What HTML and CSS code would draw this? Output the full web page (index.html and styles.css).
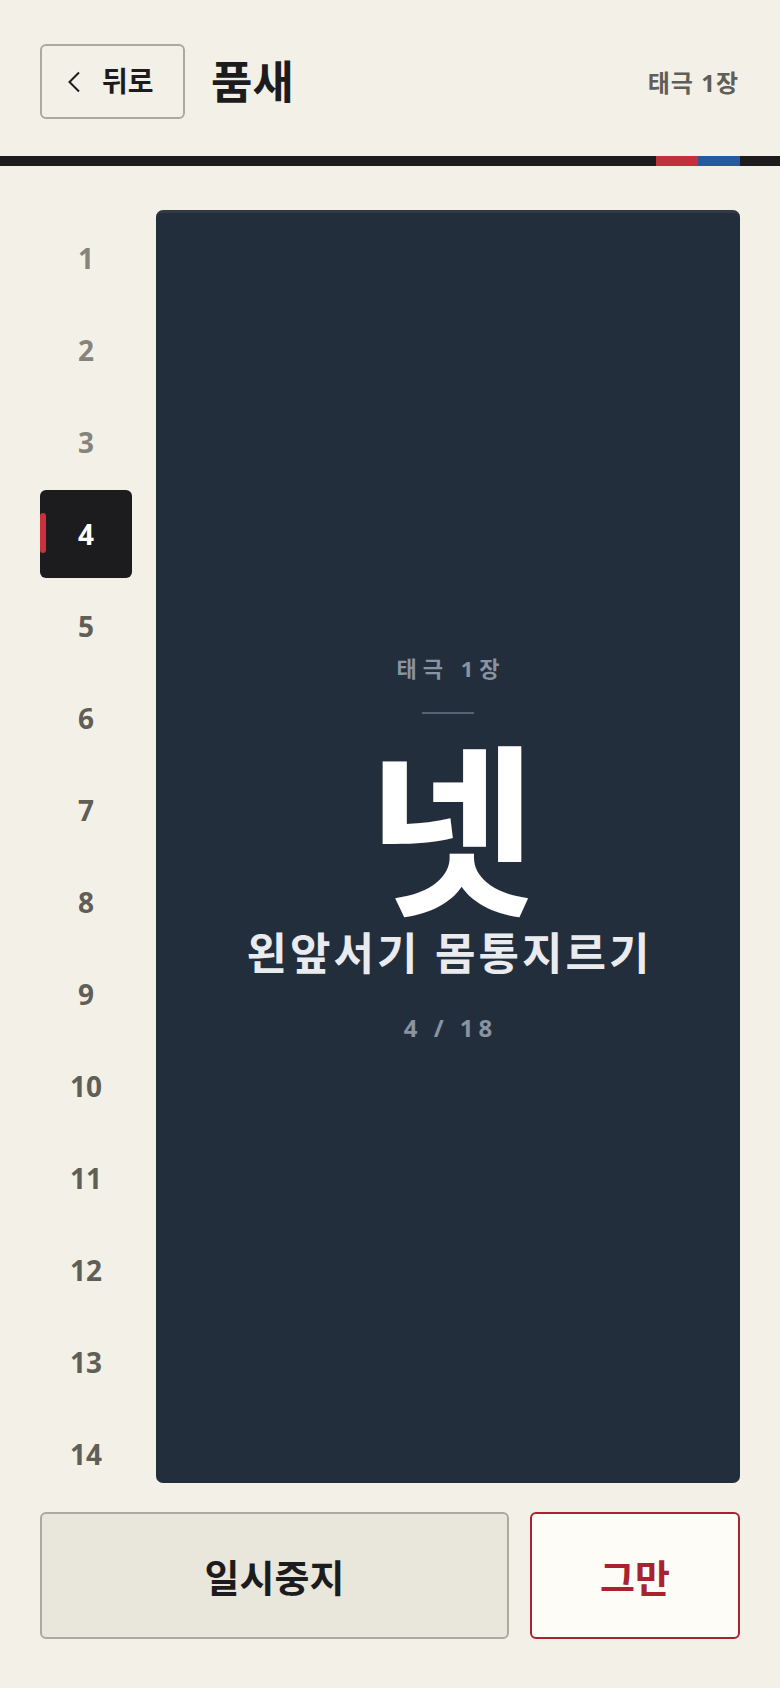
FILE: index.html
```html
<!DOCTYPE html>
<html lang="ko">
<head>
<meta charset="utf-8">
<title>품새</title>
<link rel="stylesheet" href="styles.css">
</head>
<body>
<div class="app">
  <header class="header">
    <button class="back">
      <svg class="chev" width="14" height="22" viewBox="0 0 14 22"><polyline points="12,1.5 2.5,11 12,20.5" fill="none" stroke="#1c1c1e" stroke-width="2"/></svg>
      <span>뒤로</span>
    </button>
    <h1 class="title">품새</h1>
    <div class="form-name">태극 1장</div>
  </header>
  <div class="bar"><span class="b-fill"></span><span class="b-red"></span><span class="b-blue"></span><span class="b-end"></span></div>
  <main class="main">
    <nav class="steps">
      <div class="step done">1</div>
      <div class="step done">2</div>
      <div class="step done">3</div>
      <div class="step active">4</div>
      <div class="step">5</div>
      <div class="step">6</div>
      <div class="step">7</div>
      <div class="step">8</div>
      <div class="step">9</div>
      <div class="step">10</div>
      <div class="step">11</div>
      <div class="step">12</div>
      <div class="step">13</div>
      <div class="step">14</div>
    </nav>
    <section class="panel">
      <div class="p-label">태극 1장</div>
      <div class="p-rule"></div>
      <div class="p-count">넷</div>
      <div class="p-move">왼앞서기 몸통지르기</div>
      <div class="p-progress">4 / 18</div>
    </section>
  </main>
  <footer class="actions">
    <button class="btn pause">일시중지</button>
    <button class="btn stop">그만</button>
  </footer>
</div>
</body>
</html>
```
FILE: styles.css
```css
* { box-sizing: border-box; }
html, body { margin: 0; padding: 0; }
body {
  background: #f3f0e8;
  font-family: "Noto Sans", "Noto Sans CJK KR", sans-serif;
  color: #1c1c1e;
}
.app {
  width: 780px;
  height: 1688px;
  display: flex;
  flex-direction: column;
}
.header {
  height: 156px;
  padding: 44px 41px 0 40px;
  display: flex;
  align-items: flex-start;
}
.back {
  width: 145px;
  height: 75px;
  border: 2px solid #aca99f;
  border-radius: 6px;
  background: transparent;
  display: flex;
  align-items: center;
  padding: 0 0 0 25px;
  gap: 21px;
  font-family: inherit;
  font-size: 28px;
  font-weight: 700;
  color: #1c1c1e;
  cursor: pointer;
}
.back span { line-height: 1; margin-top: -2px; }
.title {
  margin: 0 0 0 26px;
  height: 75px;
  display: flex;
  align-items: center;
  font-size: 45px;
  font-weight: 700;
  line-height: 1;
}
.form-name {
  margin-left: auto;
  height: 75px;
  display: flex;
  align-items: center;
  font-size: 24px;
  font-weight: 700;
  color: #5f5e58;
  letter-spacing: 1px;
}
.bar {
  height: 10px;
  display: flex;
}
.b-fill { flex: 1; background: #1c1c1e; }
.b-red { width: 42px; background: #c0313b; }
.b-blue { width: 42px; background: #2859a0; }
.b-end { width: 40px; background: #1c1c1e; }
.main {
  height: 1273px;
  margin-top: 44px;
  padding: 0 40px;
  display: flex;
  gap: 24px;
}
.steps {
  width: 92px;
  flex: none;
  padding-top: 4px;
  overflow: hidden;
  display: flex;
  flex-direction: column;
  gap: 4px;
}
.step {
  flex: none;
  height: 88px;
  border-radius: 6px;
  display: flex;
  align-items: center;
  justify-content: center;
  font-size: 28px;
  font-weight: 700;
  color: #5f5e57;
  position: relative;
}
.step.done { color: #85847c; }
.step.active { background: #1c1c1e; color: #ffffff; }
.step.active::before {
  content: "";
  position: absolute;
  left: 0;
  top: 23px;
  width: 6px;
  height: 40px;
  border-radius: 3px;
  background: #c8323c;
}
.panel {
  flex: 1;
  background: #232e3d;
  border-top: 3px solid #2f3a49;
  border-radius: 7px;
  display: flex;
  flex-direction: column;
  align-items: center;
  justify-content: center;
}
.p-label {
  font-size: 22px;
  font-weight: 700;
  letter-spacing: 6px;
  margin-right: -6px;
  color: #8a93a0;
  line-height: 1;
}
.p-rule {
  width: 52px;
  height: 2px;
  background: #566172;
  margin-top: 33px;
}
.p-count {
  font-family: "Noto Sans CJK KR", sans-serif;
  font-size: 184px;
  font-weight: 700;
  color: #ffffff;
  line-height: 1;
  margin-top: 15px;
  padding-left: 8px;
}
.p-move {
  font-size: 44px;
  font-weight: 700;
  color: #e9ebef;
  letter-spacing: 3px;
  margin-right: -3px;
  line-height: 1;
  margin-top: 18px;
}
.p-progress {
  font-size: 24px;
  font-weight: 700;
  color: #8a93a0;
  letter-spacing: 5px;
  margin-right: -5px;
  line-height: 1;
  margin-top: 41px;
}
.actions {
  margin-top: 29px;
  padding: 0 40px;
  display: flex;
  gap: 21px;
}
.btn {
  height: 127px;
  border-radius: 6px;
  font-family: inherit;
  font-size: 38px;
  font-weight: 700;
  cursor: pointer;
}
.pause {
  width: 469px;
  background: #e9e6dc;
  border: 2px solid #aca99f;
  color: #1c1c1e;
}
.stop {
  flex: 1;
  background: #fdfcf7;
  border: 2px solid #a8232e;
  color: #a8232e;
}
```
